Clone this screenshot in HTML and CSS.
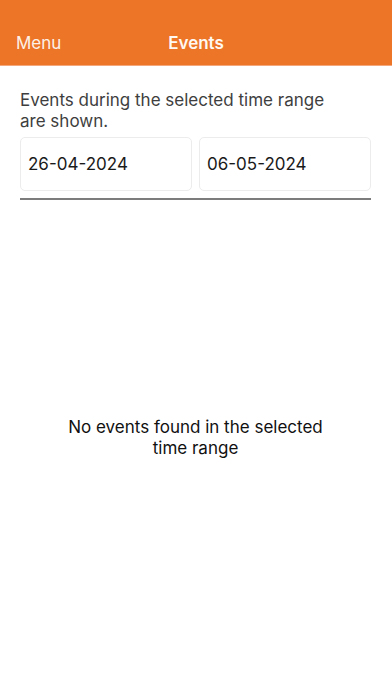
FILE: index.html
```html
<!DOCTYPE html>
<html>
<head>
<meta charset="utf-8">
<link rel="stylesheet" href="styles.css">
</head>
<body>
<div class="app">
  <header class="nav">
    <span class="nav-left">Menu</span>
    <span class="nav-title">Events</span>
  </header>
  <main class="content">
    <p class="intro">Events during the selected time range<br>are shown.</p>
    <div class="dates">
      <div class="date-box">26-04-2024</div>
      <div class="date-box">06-05-2024</div>
    </div>
    <div class="divider"></div>
    <div class="empty">No events found in the selected<br>time range</div>
  </main>
</div>
</body>
</html>
```
FILE: styles.css
```css
html, body {
  margin: 0;
  padding: 0;
  background: #fff;
}
body {
  font-family: Inter, "Liberation Sans", Arial, sans-serif;
  width: 392px;
  height: 696px;
  overflow: hidden;
}
.app {
  display: flex;
  flex-direction: column;
  height: 696px;
}
.nav {
  height: 66px;
  background: #ec7527;
  border-bottom: 1px solid #f3a77a;
  position: relative;
  display: flex;
  align-items: flex-end;
  padding: 0 16px 11px;
  box-sizing: border-box;
  color: #fff;
  font-size: 17px;
  line-height: 22px;
}
.nav-left {
  font-weight: 400;
  color: #fdf1e8;
}
.nav-title {
  position: absolute;
  left: 0;
  right: 0;
  bottom: 11px;
  text-align: center;
  font-weight: 600;
  color: #fff8f2;
  pointer-events: none;
}
.content {
  flex: 1;
  display: flex;
  flex-direction: column;
  padding: 0 21px 0 20px;
}
.intro {
  margin: 24px 0 0;
  font-size: 17px;
  line-height: 21px;
  color: #3e3e3e;
}
.dates {
  display: flex;
  gap: 7px;
  margin-top: 5px;
}
.date-box {
  flex: 1;
  height: 54px;
  box-sizing: border-box;
  border: 1px solid #ececec;
  border-radius: 5px;
  display: flex;
  align-items: center;
  padding-left: 7px;
  font-size: 17px;
  color: #1a1a1a;
}
.divider {
  height: 2px;
  background: #7c7c7c;
  margin-top: 7px;
}
.empty {
  margin-top: 217px;
  text-align: center;
  font-size: 17px;
  line-height: 21px;
  color: #111;
}
```
